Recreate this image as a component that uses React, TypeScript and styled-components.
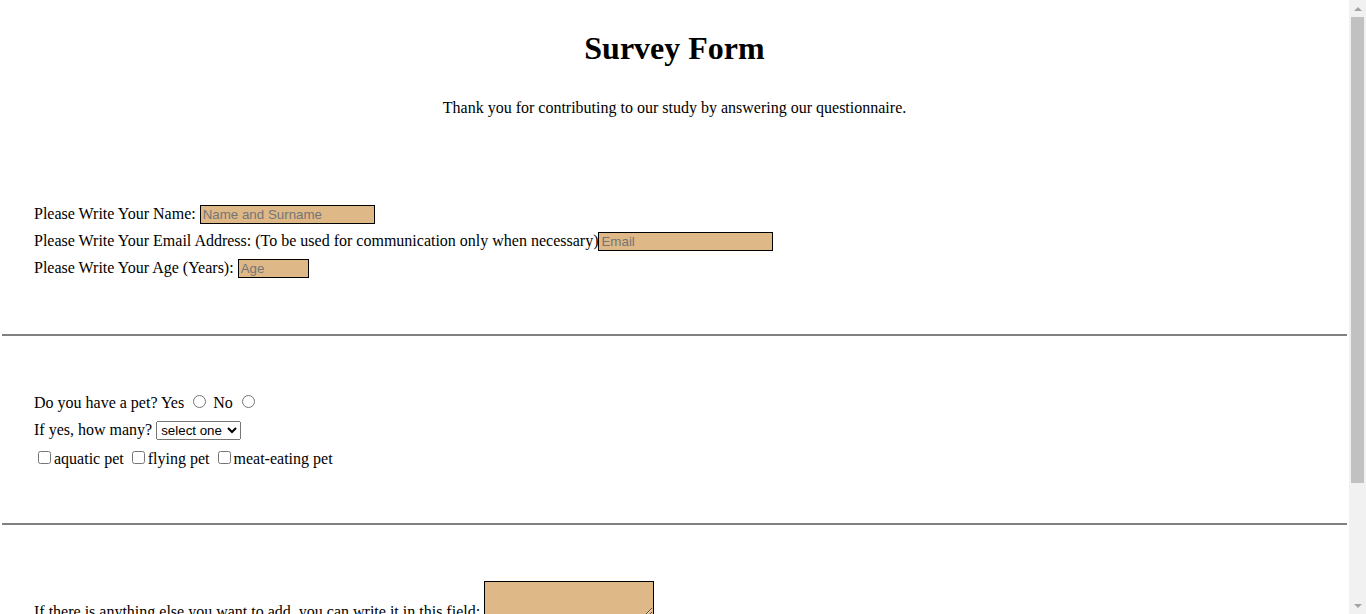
import React from "react";
import styled, { createGlobalStyle } from "styled-components";

const GlobalStyle = createGlobalStyle`
  html, body {
    margin: 0;
    padding: 0;
    background: #ffffff;
  }
  body {
    font-family: "Liberation Serif", "Times New Roman", serif;
    font-size: 16px;
    color: #000000;
  }
`;

const Shell = styled.div`
  display: flex;
  align-items: flex-start;
`;

const Page = styled.main`
  flex: 1;
  min-width: 0;
  display: flex;
  flex-direction: column;
`;

const ScrollRail = styled.aside`
  flex: none;
  position: sticky;
  top: 0;
  width: 17px;
  height: 100vh;
  display: flex;
  flex-direction: column;
  background: #f1f1f1;
`;

const ScrollButton = styled.div`
  flex: none;
  height: 17px;
  display: flex;
  align-items: center;
  justify-content: center;
`;

const ScrollTrack = styled.div`
  flex: 1;
  display: flex;
  flex-direction: column;
`;

const ScrollThumb = styled.div`
  height: 466px;
  margin: 0 2px;
  background: #c1c1c1;
`;

const Header = styled.header`
  display: flex;
  flex-direction: column;
  align-items: center;
  padding-top: 30px;
`;

const Title = styled.h1`
  margin: 0;
  font-size: 32px;
  line-height: 37px;
  font-weight: bold;
`;

const Intro = styled.p`
  margin: 32px 0 0;
  line-height: 18px;
`;

const Form = styled.form`
  display: flex;
  flex-direction: column;
`;

const Section = styled.section<{ $top: number; $bottom: number }>`
  padding: ${(p) => p.$top}px 34px ${(p) => p.$bottom}px;
`;

const Row = styled.div<{ $gap?: number }>`
  line-height: 27px;
  white-space: nowrap;
  margin-top: ${(p) => p.$gap ?? 0}px;
`;

const Divider = styled.hr`
  margin: 0 2px;
  height: 2px;
  border: none;
  background: #808080;
`;

const TextInput = styled.input<{ $width: number }>`
  box-sizing: border-box;
  width: ${(p) => p.$width}px;
  font: 13.333px "Liberation Sans", Arial, sans-serif;
  padding: 1px 2px;
  border: 1px solid #000000;
  background: #deb887;
  color: #000;
  &::placeholder {
    color: #757575;
  }
`;

const Select = styled.select`
  font: 13.333px "Liberation Sans", Arial, sans-serif;
  min-width: 85px;
`;

const Notes = styled.textarea`
  box-sizing: border-box;
  width: 170px;
  height: 36px;
  border: 1px solid #000000;
  background: #deb887;
  font: 13.333px "Liberation Mono", monospace;
  vertical-align: baseline;
`;

const SubmitRow = styled.div`
  display: flex;
  justify-content: center;
  padding: 30px 0 30px;
`;

const SubmitButton = styled.button`
  font: 13.333px "Liberation Sans", Arial, sans-serif;
`;

function Arrow({ down }: { down?: boolean }) {
  return (
    <svg width="8" height="4" viewBox="0 0 8 4" aria-hidden="true">
      <polygon points={down ? "0,0 8,0 4,4" : "0,4 8,4 4,0"} fill="#a3a3a3" />
    </svg>
  );
}

export default function App() {
  return (
    <>
      <GlobalStyle />
      <Shell>
        <Page>
          <Header>
            <Title>Survey Form</Title>
            <Intro>Thank you for contributing to our study by answering our questionnaire.</Intro>
          </Header>
          <Form onSubmit={(e) => e.preventDefault()}>
            <Section $top={83} $bottom={53}>
              <Row>
                Please Write Your Name: <TextInput $width={175} type="text" placeholder="Name and Surname" />
              </Row>
              <Row>
                Please Write Your Email Address: (To be used for communication only when necessary)
                <TextInput $width={175} type="email" placeholder="Email" />
              </Row>
              <Row>
                Please Write Your Age (Years): <TextInput $width={71} type="text" placeholder="Age" />
              </Row>
            </Section>
            <Divider />
            <Section $top={53} $bottom={51}>
              <Row>
                Do you have a pet? Yes <input type="radio" name="pet" value="yes" /> No{" "}
                <input type="radio" name="pet" value="no" />
              </Row>
              <Row>
                If yes, how many?{" "}
                <Select defaultValue="">
                  <option value="">select one</option>
                  <option value="1">1</option>
                  <option value="2">2</option>
                  <option value="3">3</option>
                  <option value="more">more</option>
                </Select>
              </Row>
              <Row $gap={2}>
                {" "}
                <input type="checkbox" />aquatic pet <input type="checkbox" />flying pet{" "}
                <input type="checkbox" />meat-eating pet
              </Row>
            </Section>
            <Divider />
            <Section $top={56} $bottom={52}>
              <Row>
                If there is anything else you want to add, you can write it in this field: <Notes />
              </Row>
            </Section>
            <Divider />
            <SubmitRow>
              <SubmitButton type="submit">Submit</SubmitButton>
            </SubmitRow>
          </Form>
        </Page>
        <ScrollRail aria-hidden="true">
          <ScrollButton>
            <Arrow />
          </ScrollButton>
          <ScrollTrack>
            <ScrollThumb />
          </ScrollTrack>
          <ScrollButton>
            <Arrow down />
          </ScrollButton>
        </ScrollRail>
      </Shell>
    </>
  );
}
